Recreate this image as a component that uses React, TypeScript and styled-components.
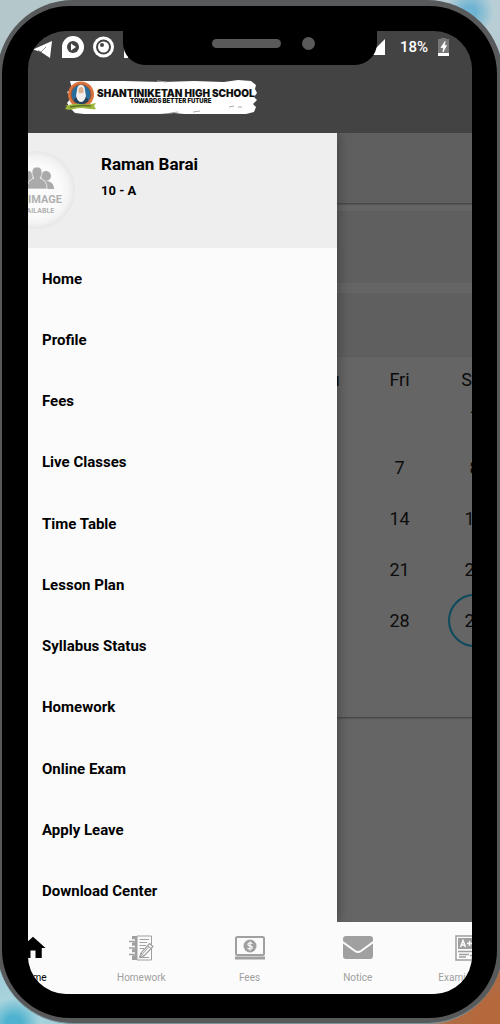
import React from 'react';
import styled, { createGlobalStyle } from 'styled-components';
import { MdHome } from 'react-icons/md';

const GlobalStyle = createGlobalStyle`
  *, *::before, *::after { box-sizing: border-box; }
  body { margin: 0; font-family: Roboto, "Liberation Sans", sans-serif; color: #000; }
`;

const Wallpaper = styled.div`
  display: flex;
  min-height: 100vh;
  overflow: hidden;
  background:
    radial-gradient(circle at 100% 100%, #b5683c 0 20px, #b06c44 50px, transparent 110px),
    radial-gradient(circle at 14px 100%, #4fb3cf 0 8px, #a9d3dc 26px, transparent 80px),
    radial-gradient(circle at 94% 12px, #6fb4d2 0 6px, #b9cfd6 24px, transparent 60px),
    linear-gradient(#b4c8cb, #b4c8cb 30%, #8fc4d4);
`;

const Frame = styled.div`
  flex: 1;
  display: flex;
  margin: 0 -3px;
  padding: 6px 6px 5px 5px;
  border-radius: 76px;
  border-bottom: 1px solid #7c9299;
  background: #58595a;
`;

const Bezel = styled.div`
  flex: 1;
  display: flex;
  padding: 25px 25px 24px 26px;
  border-radius: 68px;
  background: #000;
`;

const Screen = styled.div`
  position: relative;
  flex: 1;
  display: flex;
  min-width: 0;
  overflow: hidden;
  border-radius: 38px;
  background: #434343;
`;

const Notch = styled.div`
  position: absolute;
  top: 0;
  left: 50%;
  z-index: 3;
  display: flex;
  align-items: center;
  gap: 21px;
  width: 254px;
  height: 34px;
  margin-left: -127px;
  padding: 0 0 9px 89px;
  border-radius: 0 0 22px 22px;
  background: #000;
`;

const Speaker = styled.span`
  width: 69px;
  height: 9px;
  border-radius: 5px;
  background: #5a5a5a;
`;

const Camera = styled.span`
  width: 13px;
  height: 13px;
  border-radius: 50%;
  background: #5a5a5a;
`;

const Page = styled.div`
  flex: none;
  display: flex;
  flex-direction: column;
  width: calc(100% + 97px);
  margin-left: -49px;
`;

const StatusBar = styled.div`
  display: flex;
  align-items: center;
  justify-content: space-between;
  height: 31px;
  padding: 0 71px 0 53px;
  color: #fff;
`;

const StatusGroup = styled.div<{ $gap: number }>`
  display: flex;
  align-items: center;
  gap: ${(p) => p.$gap}px;
  font-size: 15px;
  font-weight: 500;
  line-height: 20px;
`;

const AppBar = styled.header`
  display: flex;
  align-items: center;
  height: 71px;
  padding-left: 85px;
`;

const Body = styled.div`
  position: relative;
  flex: 1;
  display: flex;
  flex-direction: column;
  overflow: hidden;
  background: #656565;
`;

const Drawer = styled.nav`
  position: absolute;
  top: 0;
  bottom: 0;
  left: 0;
  z-index: 1;
  display: flex;
  flex-direction: column;
  width: 358px;
  background: #fbfbfb;
  box-shadow: 0 0 12px rgba(0, 0, 0, 0.4);
`;

const Profile = styled.div`
  display: flex;
  gap: 26px;
  height: 115px;
  padding: 18px 0 0 18px;
  background: #eee;
`;

const Avatar = styled.div`
  display: flex;
  flex-direction: column;
  align-items: center;
  width: 78px;
  height: 78px;
  padding-top: 16px;
  border-radius: 50%;
  background: radial-gradient(circle, #fbfbfb 0 45%, #f3f3f3 60%, #e6e6e6 71%);
  color: #b0b0b0;
  font-weight: 700;
`;

const AvatarLine = styled.span<{ $size: number; $line: number }>`
  font-size: ${(p) => p.$size}px;
  line-height: ${(p) => p.$line}px;
  white-space: nowrap;
`;

const StudentName = styled.div`
  margin-top: 3px;
  font-size: 17px;
  font-weight: 700;
  line-height: 20px;
`;

const StudentClass = styled.div`
  margin-top: 9px;
  font-size: 13px;
  font-weight: 700;
  line-height: 16px;
`;

const Menu = styled.ul`
  flex: 1;
  display: flex;
  flex-direction: column;
  margin: 0;
  padding: 0;
  list-style: none;
`;

const MenuItem = styled.li`
  flex: 1;
  display: flex;
`;

const MenuLink = styled.a`
  flex: 1;
  display: flex;
  align-items: center;
  min-height: 40px;
  padding-left: 63px;
  color: #000;
  font-size: 15px;
  font-weight: 700;
  line-height: 20px;
  text-decoration: none;
`;

const Panel = styled.div<{ $height: number; $gap: number; $raised?: boolean }>`
  height: ${(p) => p.$height}px;
  margin-bottom: ${(p) => p.$gap}px;
  background: #5f5f5f;
  box-shadow: ${(p) => (p.$raised ? '0 1px 2px rgba(0, 0, 0, 0.4)' : 'none')};
`;

const CalendarCard = styled.section`
  height: 360px;
  padding: 6px 8px 0;
  background: #656565;
  box-shadow: 0 1px 2px rgba(0, 0, 0, 0.4);
`;

const Calendar = styled.table`
  width: 100%;
  table-layout: fixed;
  border-collapse: collapse;
  font-size: 18px;
  line-height: 20px;
  text-align: center;
  color: #0c0c0c;
`;

const Weekday = styled.th`
  height: 28px;
  padding: 6px 0 0;
  font-weight: 400;
`;

const Day = styled.td`
  height: 51px;
  padding: 0;
`;

const DayMark = styled.span<{ $today: boolean }>`
  display: inline-flex;
  align-items: center;
  justify-content: center;
  width: 53px;
  height: 53px;
  margin: -1px;
  border: 2px solid ${(p) => (p.$today ? '#0c4a5e' : 'transparent')};
  border-radius: 50%;
  vertical-align: top;
`;

const TabBar = styled.nav`
  display: flex;
  height: 72px;
  background: #fbfbfb;
`;

const Tab = styled.a<{ $active?: boolean }>`
  flex: 1 0 0;
  display: flex;
  flex-direction: column;
  align-items: center;
  gap: 8px;
  padding-top: 11px;
  color: ${(p) => (p.$active ? '#000' : '#a0a0a0')};
  font-size: 10px;
  line-height: 14px;
  text-decoration: none;
  white-space: nowrap;
`;

const TabIcon = styled.span`
  display: flex;
  align-items: center;
  height: 30px;
`;

const SchoolLogo = () => (
  <svg width="194" height="36" viewBox="0 0 194 36" role="img" aria-label="Shantiniketan High School">
    <path
      d="M6 1 L60 1 98 2 130 1 160 2 174 0 187 1 192 5 191 9 193 13 190 17 193 20 189 24 192 27 190 32 182 34 120 34 110 33 96 34 20 34 11 33 7 29 3 23 7 18 3 12 8 9Z"
      fill="#fff"
    />
    <path d="M106 33l8-1M129 32l7-1M165 27l5-1M174 27l4 0M93 1l10 1" stroke="#aaa" strokeWidth="1" />
    <circle cx="17" cy="14.500" r="13" fill="#d9743f" />
    <circle cx="17" cy="14.500" r="10" fill="#2a6d9c" />
    <circle cx="17" cy="14.500" r="10" fill="none" stroke="#a3532c" strokeWidth="1" />
    <path d="M9.500 21c1-4 4-5 7.500-5s6.500 1 7.500 5c-4 4-11 4-15 0z" fill="#24415c" />
    <path d="M13 10c0-7 8-7 8 0l1 6c-1 4-3 6-5 6s-4-2-5-6z" fill="#f1eeeb" />
    <ellipse cx="17" cy="10.500" rx="2.500" ry="3.500" fill="#dfae8c" />
    <path d="M14.500 13h5l-2.500 2z" fill="#f1eeeb" />
    <path d="M0 25c5 1 8-2 16-1s11 0 16-1l-2 3 2 3c-5 1-9-1-15-1-6 0-10 3-16 1l2-3z" fill="#9db63c" />
    <path d="M6 27c8-2 14-2 21-1" stroke="#5b7429" strokeWidth="1.500" fill="none" />
    <text x="33" y="17" fontFamily="Inter, sans-serif" fontWeight="900" fontSize="10" fill="#111">
      SHANTINIKETAN HIGH SCHOOL
    </text>
    <text x="66" y="23" fontFamily="Inter, sans-serif" fontWeight="900" fontSize="6" fill="#111">
      TOWARDS BETTER FUTURE
    </text>
  </svg>
);

const StatusIcons = () => (
  <svg width="96" height="24" viewBox="32 0 96 24" fill="#fff" aria-hidden="true">
    <path d="M33 14.500L52 6l-2 17-9-6z" />
    <path d="M46 12l-5 5-3-1.500" fill="none" stroke="#434343" strokeWidth="0.600" />
    <path d="M62 23V12a11 11 0 1 1 11 11z" />
    <circle cx="73" cy="12" r="6" fill="#434343" />
    <path d="M71 8.500l5 3.500-5 3.500z" />
    <circle cx="103.500" cy="12" r="10.500" />
    <circle cx="103.500" cy="12" r="7.500" fill="#434343" />
    <circle cx="103.500" cy="12" r="5.500" />
    <circle cx="102" cy="10" r="2" fill="#434343" />
    <path d="M124 13h4v10h-4z" />
  </svg>
);

const SignalIcon = () => (
  <svg width="18" height="18" viewBox="0 0 18 18" fill="#fff" aria-hidden="true">
    <path d="M18 1v16H2z" />
  </svg>
);

const BatteryIcon = () => (
  <svg width="11" height="19" viewBox="0 0 11 19" aria-hidden="true">
    <path d="M3 1h5v1h3v17H0V2h3z" fill="#777" />
    <path d="M0 16h11v3H0z" fill="#fff" />
    <path d="M7 4.500L3 10.500h2.500l-.5 4.500 3.500-6.500H6.500z" fill="#fff" stroke="#fff" strokeWidth="0.800" />
  </svg>
);

const PeopleIcon = () => (
  <svg width="40" height="22" viewBox="0 0 40 22" fill="#aaa" aria-hidden="true">
    <circle cx="12" cy="9" r="5" />
    <circle cx="30" cy="9" r="5" />
    <path d="M3 22c0-5 4-8 9-8h18c5 0 8 3 8 8z" />
    <path
      d="M21 0c-4 0-5 3-5 6 0 2 1 4 2 5-4 2-7 4-7 11h20c0-7-3-9-7-11 1-1 2-3 2-5 0-3-1-6-5-6z"
      stroke="#f4f4f4"
      strokeWidth="0.800"
    />
  </svg>
);

const HomeworkIcon = () => (
  <svg width="25" height="26" viewBox="0 0 25 26" fill="none" stroke="currentColor" aria-hidden="true">
    <path d="M3 1h5v24H3z" fill="currentColor" stroke="none" />
    <path d="M8 1h14.500v24H8z" />
    <path d="M0 6h6M0 12.500h6M0 19h6" stroke="#fbfbfb" strokeWidth="3.500" />
    <path d="M0 6.500h5V8M0 13h5v1.500M0 19.500h5V21" strokeWidth="1.500" />
    <path d="M10.500 4.500H20M10.500 7.500H18M10.500 10.500H17M10.500 13.500H15M10.500 22.500H20" strokeWidth="1" />
    <path d="M20.500 8.500l3.500 3L15 21l-4.500 1.500L12 18z" fill="#fbfbfb" strokeWidth="1.200" />
    <path d="M18.500 10.500l3.500 3M12 18l3 3M10.500 22.500L20 11.500" />
  </svg>
);

const FeesIcon = () => (
  <svg width="30" height="24" viewBox="0 0 30 24" fill="none" stroke="currentColor" aria-hidden="true">
    <rect x="1" y="1" width="28" height="18" rx="1.500" strokeWidth="2" />
    <path d="M0 22h30" strokeWidth="3" />
    <circle cx="15" cy="10" r="6.500" fill="currentColor" stroke="none" />
    <path d="M17.300 7.800c-.6-1.100-4.400-1.300-4.400.6 0 2 4.400 1 4.400 3.100 0 2-4 1.800-4.700.4M15 5.500v9" stroke="#fbfbfb" strokeWidth="1.200" />
  </svg>
);

const NoticeIcon = () => (
  <svg width="30" height="24" viewBox="0 0 30 24" aria-hidden="true">
    <rect x="0" y="0" width="30" height="23" rx="3" fill="currentColor" />
    <path d="M-1 5.500l13 9.500q3 2 6 0l13-9.500" fill="none" stroke="#fbfbfb" strokeWidth="2" />
  </svg>
);

const ExamIcon = () => (
  <svg width="22" height="26" viewBox="0 0 22 26" fill="none" stroke="currentColor" aria-hidden="true">
    <path d="M1 1h20v24H1z" strokeWidth="1.500" />
    <path d="M3 3h16v11H3z" fill="currentColor" stroke="none" />
    <path d="M5.500 12L8 5.500l2.500 6.500M6.500 10h3M12 8.500h5M14.500 6v5" stroke="#fbfbfb" strokeWidth="1.500" />
    <path d="M3 16.500h16M4 19.500h10M4 22h7M15 20.500h4" strokeWidth="1.500" />
  </svg>
);

const menuItems = [
  'Home', 'Profile', 'Fees', 'Live Classes', 'Time Table', 'Lesson Plan',
  'Syllabus Status', 'Homework', 'Online Exam', 'Apply Leave', 'Download Center',
];

const weekdays = ['Sun', 'Mon', 'Tue', 'Wed', 'Thu', 'Fri', 'Sat'];
const today = 29;
const weeks = Array.from({ length: 5 }, (_, week) =>
  weekdays.map((_name, weekday) => week * 7 + weekday - 5),
);

const tabs = [
  { label: 'Home', icon: <MdHome size={30} />, active: true },
  { label: 'Homework', icon: <HomeworkIcon /> },
  { label: 'Fees', icon: <FeesIcon /> },
  { label: 'Notice', icon: <NoticeIcon /> },
  { label: 'Examination', icon: <ExamIcon /> },
];

export default function App() {
  return (
    <Wallpaper>
      <GlobalStyle />
      <Frame>
        <Bezel>
          <Screen>
            <Notch>
              <Speaker />
              <Camera />
            </Notch>
            <Page>
              <StatusBar>
                <StatusIcons />
                <StatusGroup $gap={10}>
                  <StatusGroup $gap={15}>
                    <SignalIcon />
                    <span>18%</span>
                  </StatusGroup>
                  <BatteryIcon />
                </StatusGroup>
              </StatusBar>
              <AppBar>
                <SchoolLogo />
              </AppBar>
              <Body>
                <Drawer aria-label="Main menu">
                  <Profile>
                    <Avatar>
                      <PeopleIcon />
                      <AvatarLine $size={11} $line={22}>NO IMAGE</AvatarLine>
                      <AvatarLine $size={7} $line={1}>AVAILABLE</AvatarLine>
                    </Avatar>
                    <div>
                      <StudentName>Raman Barai</StudentName>
                      <StudentClass>10 - A</StudentClass>
                    </div>
                  </Profile>
                  <Menu>
                    {menuItems.map((item) => (
                      <MenuItem key={item}>
                        <MenuLink href="#">{item}</MenuLink>
                      </MenuItem>
                    ))}
                  </Menu>
                </Drawer>
                <Panel $height={70} $gap={8} $raised />
                <Panel $height={72} $gap={10} />
                <Panel $height={64} $gap={0} />
                <CalendarCard>
                  <Calendar>
                    <thead>
                      <tr>
                        {weekdays.map((name) => (
                          <Weekday key={name} scope="col">{name}</Weekday>
                        ))}
                      </tr>
                    </thead>
                    <tbody>
                      {weeks.map((days, index) => (
                        <tr key={index}>
                          {days.map((day) => (
                            <Day key={day}>
                              {day > 0 && <DayMark $today={day === today}>{day}</DayMark>}
                            </Day>
                          ))}
                        </tr>
                      ))}
                    </tbody>
                  </Calendar>
                </CalendarCard>
              </Body>
              <TabBar aria-label="Sections">
                {tabs.map((tab) => (
                  <Tab key={tab.label} href="#" $active={tab.active}>
                    <TabIcon>{tab.icon}</TabIcon>
                    {tab.label}
                  </Tab>
                ))}
              </TabBar>
            </Page>
          </Screen>
        </Bezel>
      </Frame>
    </Wallpaper>
  );
}
